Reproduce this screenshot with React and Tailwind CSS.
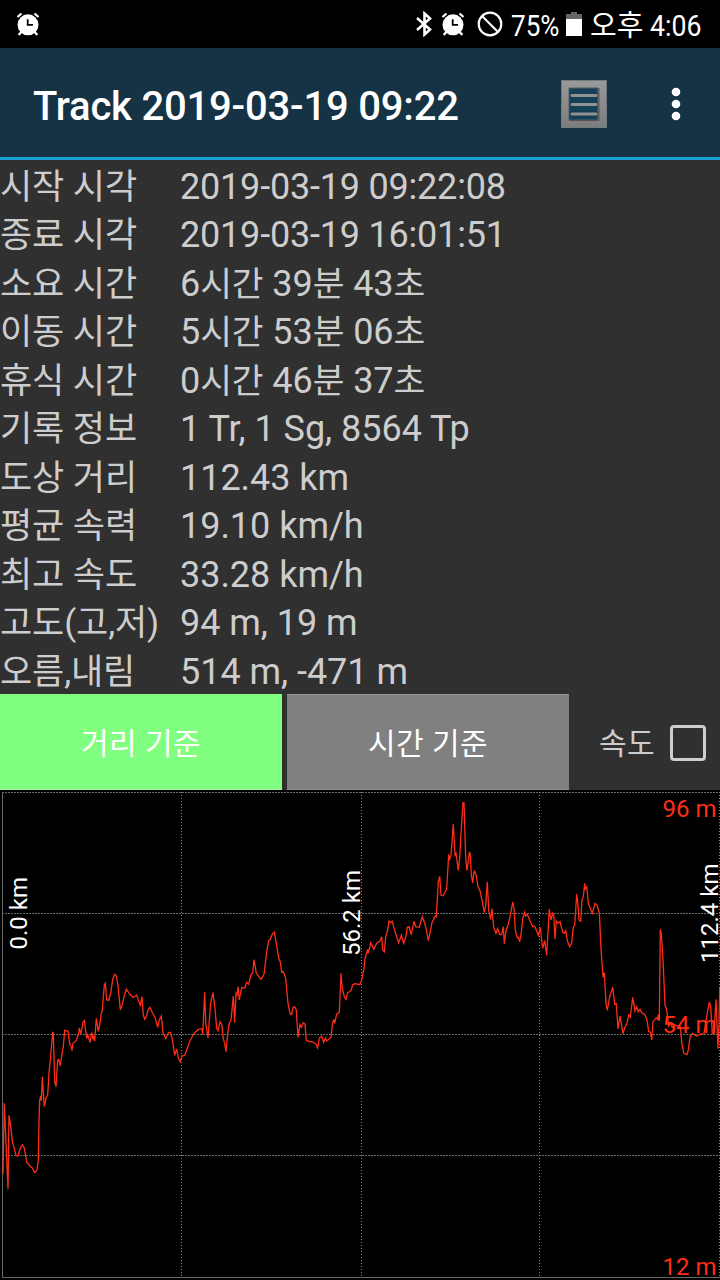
const TRACE = [
  { x: 0, y: 960, pts: "9,642 13,430 24,686 27,466 33,505 37,545 43,565 48,587 55,588 60,566 67,554 73,564 80,606 90,618 97,624 104,638 111,630 115,600 117,480 119,420 122,408 124,422 127,350 133,440 138,415 143,404 147,340 151,300 158,217 160,217 164,365 168,380 173,300 176,298 181,317 186,283 190,260 194,211 204,214 209,252 214,260 216,272 219,250 229,242 236,220 238,204 243,222 249,186 253,182 260,235 263,224 270,247 275,218 279,238 281,228 284,243 289,175 295,214 300,190 303,165 307,150 313,75 316,70 320,120 326,121 332,100 338,58 344,43 349,48 354,75 361,149 367,133 372,110 379,88 386,98 399,113 410,105 414,118 421,136 426,110 430,165 434,178 440,168 444,150 450,142 456,155 466,175 473,202 478,180 484,168 489,218 497,236 505,218 511,217 517,237 524,286 530,267 535,294 541,305 546,287" },
  { x: 180, y: 880, pts: "7,528 14,526 22,505 30,482 42,460 54,449 66,446 68,464 74,337 77,430 84,474 92,368 99,338 106,395 110,445 114,452 120,425 125,432 130,476 134,490 138,515 143,460 148,430 153,420 160,348 164,428 168,340 171,345 174,320 178,360 185,322 194,325 200,307 206,313 212,286 218,278 222,239 225,255 229,280 243,298 252,283 260,215 266,182 271,178 277,162 283,156 289,190 297,238 301,245 305,277 310,275 317,295 324,370 331,403 335,403 339,382 344,380 349,390 354,472 360,434 364,442 370,428 375,432 379,482 399,486 408,492 413,504 418,474 425,469 431,487 436,474 440,483 446,478 453,472 457,435 461,418 464,430 470,402 478,398 483,280 487,325 493,350 498,358 503,338 513,332 518,314 525,311 539,314 545,300" },
  { x: 340, y: 790, pts: "66,565 72,535 75,506 83,478 85,490 92,458 101,478 110,460 120,454 125,440 128,480 133,485 137,440 142,425 147,393 151,398 157,394 163,418 170,440 176,458 184,436 191,460 198,438 202,412 207,410 214,434 222,394 227,410 238,412 247,380 255,402 260,425 265,452 271,425 276,398 286,378 289,380 295,275 299,259 303,316 309,317 320,297 326,193 329,207 333,197 340,102 345,195 348,190 352,218 355,241 359,205 363,130 369,38 372,38 377,205 381,242 388,188 391,193 394,255 398,279 401,250 404,244 409,258 414,290 420,302 427,335 433,368 437,345 442,276 446,360 452,388 456,356 461,412 468,430 473,416 479,434 485,434 490,410 493,461 498,422 505,402 512,370 518,336 522,355 526,420 531,442 535,442 539,455 544,428 548,385 554,367 557,378 562,373 570,393" },
  { x: 530, y: 790, pts: "0,393 8,410 14,408 25,436 31,412 34,440 38,475 44,452 50,496 54,425 58,357 63,390 68,370 71,375 75,448 79,392 84,400 90,395 98,427 104,430 107,420 112,452 119,470 125,458 130,412 134,405 140,313 144,345 147,390 152,394 156,330 160,320 164,280 166,297 170,290 175,340 181,355 187,370 195,340 201,345 208,368 213,475 219,562 223,548 228,640 232,661 239,620 248,592 254,643 259,641 264,717 270,678 279,731 284,713 290,702 296,675 301,681 308,622 315,663 320,650 325,665 330,658 335,668 345,674 351,690 356,725 361,726 365,750 369,695 379,683 383,688 385,674 388,693 391,418 394,430 399,510 405,645 410,660 416,708 421,700 427,712 434,705 451,710 456,765 462,790 471,794 475,780 480,742 488,730 493,734 501,739 508,733 522,731 528,692 538,636 542,650 547,731 552,730 558,628 564,776 567,700 569,590" },
];

const points = TRACE.flatMap(({ x, y, pts }) =>
  pts.split(" ").map((p) => {
    const [px, py] = p.split(",").map(Number);
    return `${(x + px / 3).toFixed(1)},${(y + py / 3).toFixed(1)}`;
  })
).join(" ");

const DATE = "tracking-[-0.2px]";
const DURATION = "tracking-[-0.08px]";
const PLAIN = "tracking-[-0.03px]";

const ROWS = [
  ["시작 시각", "2019-03-19 09:22:08", DATE],
  ["종료 시각", "2019-03-19 16:01:51", DATE],
  ["소요 시간", "6시간 39분 43초", DURATION],
  ["이동 시간", "5시간 53분 06초", DURATION],
  ["휴식 시간", "0시간 46분 37초", DURATION],
  ["기록 정보", "1 Tr, 1 Sg, 8564 Tp", PLAIN],
  ["도상 거리", "112.43 km", PLAIN],
  ["평균 속력", "19.10 km/h", PLAIN],
  ["최고 속도", "33.28 km/h", PLAIN],
  ["고도(고,저)", "94 m, 19 m", PLAIN],
  ["오름,내림", "514 m, -471 m", PLAIN],
];

// Hangul sits slightly smaller than the Latin digits beside it.
function Value({ text, className }) {
  return (
    <span className={className}>
      {text.split(/([가-힣]+)/).map((part, i) =>
        i % 2 ? <span key={i} className="text-[34.500px]">{part}</span> : part
      )}
    </span>
  );
}

function Alarm({ className }) {
  return (
    <svg viewBox="0 0 24 24" className={className}>
      <circle cx="12" cy="12.8" r="10.5" fill="#fff" />
      <path d="M1.500 5 5.500 1.500M22.500 5 18.500 1.500M2.600 22.800 5.500 20M21.400 22.800 18.500 20" stroke="#fff" strokeWidth="2.300" />
      <path d="M11.700 7.200V12.800H17" fill="none" stroke="#000" strokeWidth="1.800" />
    </svg>
  );
}

function StatusBar() {
  return (
    <div className="flex h-12 items-center bg-black text-[29px] leading-[48px] text-white">
      <Alarm className="ml-4 h-6 w-6" />
      <svg viewBox="0 0 16 26" className="ml-[376px] h-[26px] w-4">
        <path d="M1 7 14 18.500 8.500 23.500V2.500L14 7.500 1 19" fill="none" stroke="#fff" strokeWidth="2.600" />
      </svg>
      <Alarm className="ml-[9px] h-6 w-6" />
      <svg viewBox="0 0 26 26" className="ml-3 h-[26px] w-[26px]">
        <circle cx="13" cy="13" r="11.3" fill="none" stroke="#fff" strokeWidth="2.2" />
        <path d="M5 5 21 21" stroke="#fff" strokeWidth="2.2" />
      </svg>
      <span className="ml-[8px] w-[49px] origin-left scale-x-[0.9] whitespace-nowrap pt-1">75%</span>
      <svg viewBox="0 0 16 24" className="ml-[6px] h-6 w-4">
        <path d="M5 0h6v2h5v6H0V2h5Z" fill="#666" />
        <path d="M0 7h16v17H0Z" fill="#fff" />
      </svg>
      <span className="ml-2 w-[52px] whitespace-nowrap pt-1">오후</span>
      <span className="ml-2 origin-left scale-x-[0.92] whitespace-nowrap pt-1">4:06</span>
    </div>
  );
}

function ActionBar() {
  return (
    <div className="flex h-28 items-center border-b-[3px] border-[#1a9fd4] bg-[#153344] pl-[33px]">
      <h1 className="w-[526px] whitespace-nowrap pt-[9px] text-[40px] font-medium leading-none tracking-[-0.2px] text-white">
        Track 2019-03-19 09:22
      </h1>
      <svg viewBox="0 0 50 50" className="mt-[3px] h-[50px] w-[50px]">
        <defs>
          <linearGradient id="page" x2="0" y2="1">
            <stop stopColor="#9a9a9a" />
            <stop offset="1" stopColor="#7c7c7c" />
          </linearGradient>
        </defs>
        <path d="M2.500 1.500h45v47h-45Z" fill="url(#page)" stroke="#6d7c83" />
        <path d="M10 9h29v32H10Z" fill="#153f55" stroke="#555c60" />
        <path d="M10 41.500h30V9" fill="none" stroke="#555" />
        <path d="M13 16.500h24M13 25.500h24M13 35h24" stroke="#929292" strokeWidth="2.800" strokeLinecap="round" />
      </svg>
      <svg viewBox="0 0 10 34" className="ml-[62px] mt-[2px] h-[34px] w-[10px]">
        <circle cx="5" cy="5" r="4.300" fill="#fff" />
        <circle cx="5" cy="17" r="4.300" fill="#fff" />
        <circle cx="5" cy="29" r="4.300" fill="#fff" />
      </svg>
    </div>
  );
}

function Chart() {
  return (
    <svg viewBox="0 790 720 490" className="block h-[490px] w-[720px] bg-black">
      <g stroke="#6c6c6c" fill="none" shapeRendering="crispEdges">
        <path d="M2.500 792V1278M2 1277.500H720" stroke="#666" />
        <path d="M2 792.500H720M2 913.500H720M2 1034.500H720M2 1155.500H720" strokeDasharray="2 1" />
        <path d="M181.500 792V1277M361.500 792V1277M539.500 792V1277M719.500 792V1277" stroke="#808080" strokeDasharray="1 2" />
      </g>
      <polyline points={points} fill="none" stroke="#ff2d16" strokeWidth="1.300" />
      <g fill="#fff" fontSize="24">
        <text transform="translate(27 949.500) rotate(-90)">0.0 km</text>
        <text transform="translate(360 956) rotate(-90)">56.2 km</text>
        <text transform="translate(718 963) rotate(-90)">112.4 km</text>
      </g>
      <g fill="#ff2d16" fontSize="24" textAnchor="end">
        <text x="716.500" y="817">96 m</text>
        <text x="716.500" y="1033">54 m</text>
        <text x="716.500" y="1275">12 m</text>
      </g>
    </svg>
  );
}

export default function App() {
  return (
    <div className="h-[1280px] w-[720px] overflow-hidden bg-[#303030] font-['Roboto','Noto_Sans_CJK_KR',sans-serif]">
      <StatusBar />
      <ActionBar />
      <div className="h-[533.500px] pt-[2.500px] text-[36px] text-[#cdcdcd]">
        {ROWS.map(([label, value, style]) => (
          <div key={label} className="flex h-[48.500px] items-center whitespace-nowrap leading-[48px]">
            <span className="w-[180px] pt-[2px] text-[35px] tracking-[-0.1px]">{label}</span>
            <Value text={value} className={style} />
          </div>
        ))}
      </div>
      <div className="flex h-[96.500px] text-[30px] text-white">
        <button className="h-[96px] w-[282px] border-y border-t-[#80ff80] border-b-[#a5f5a5] bg-[#80ff80] pt-[3px] tracking-[0.4px]">거리 기준</button>
        <button className="ml-[5px] h-[96px] w-[282px] border-y border-[#929292] bg-[#808080] pt-[3px] tracking-[0.4px]">시간 기준</button>
        <label className="flex items-center pl-[30px] pt-[2px] text-[#cdcdcd]">
          <span className="w-[71px] pt-[2px] tracking-[0.4px]">속도</span>
          <span className="h-9 w-9 rounded-[4px] border-[3px] border-[#cdcdcd]" />
        </label>
      </div>
      <Chart />
    </div>
  );
}
